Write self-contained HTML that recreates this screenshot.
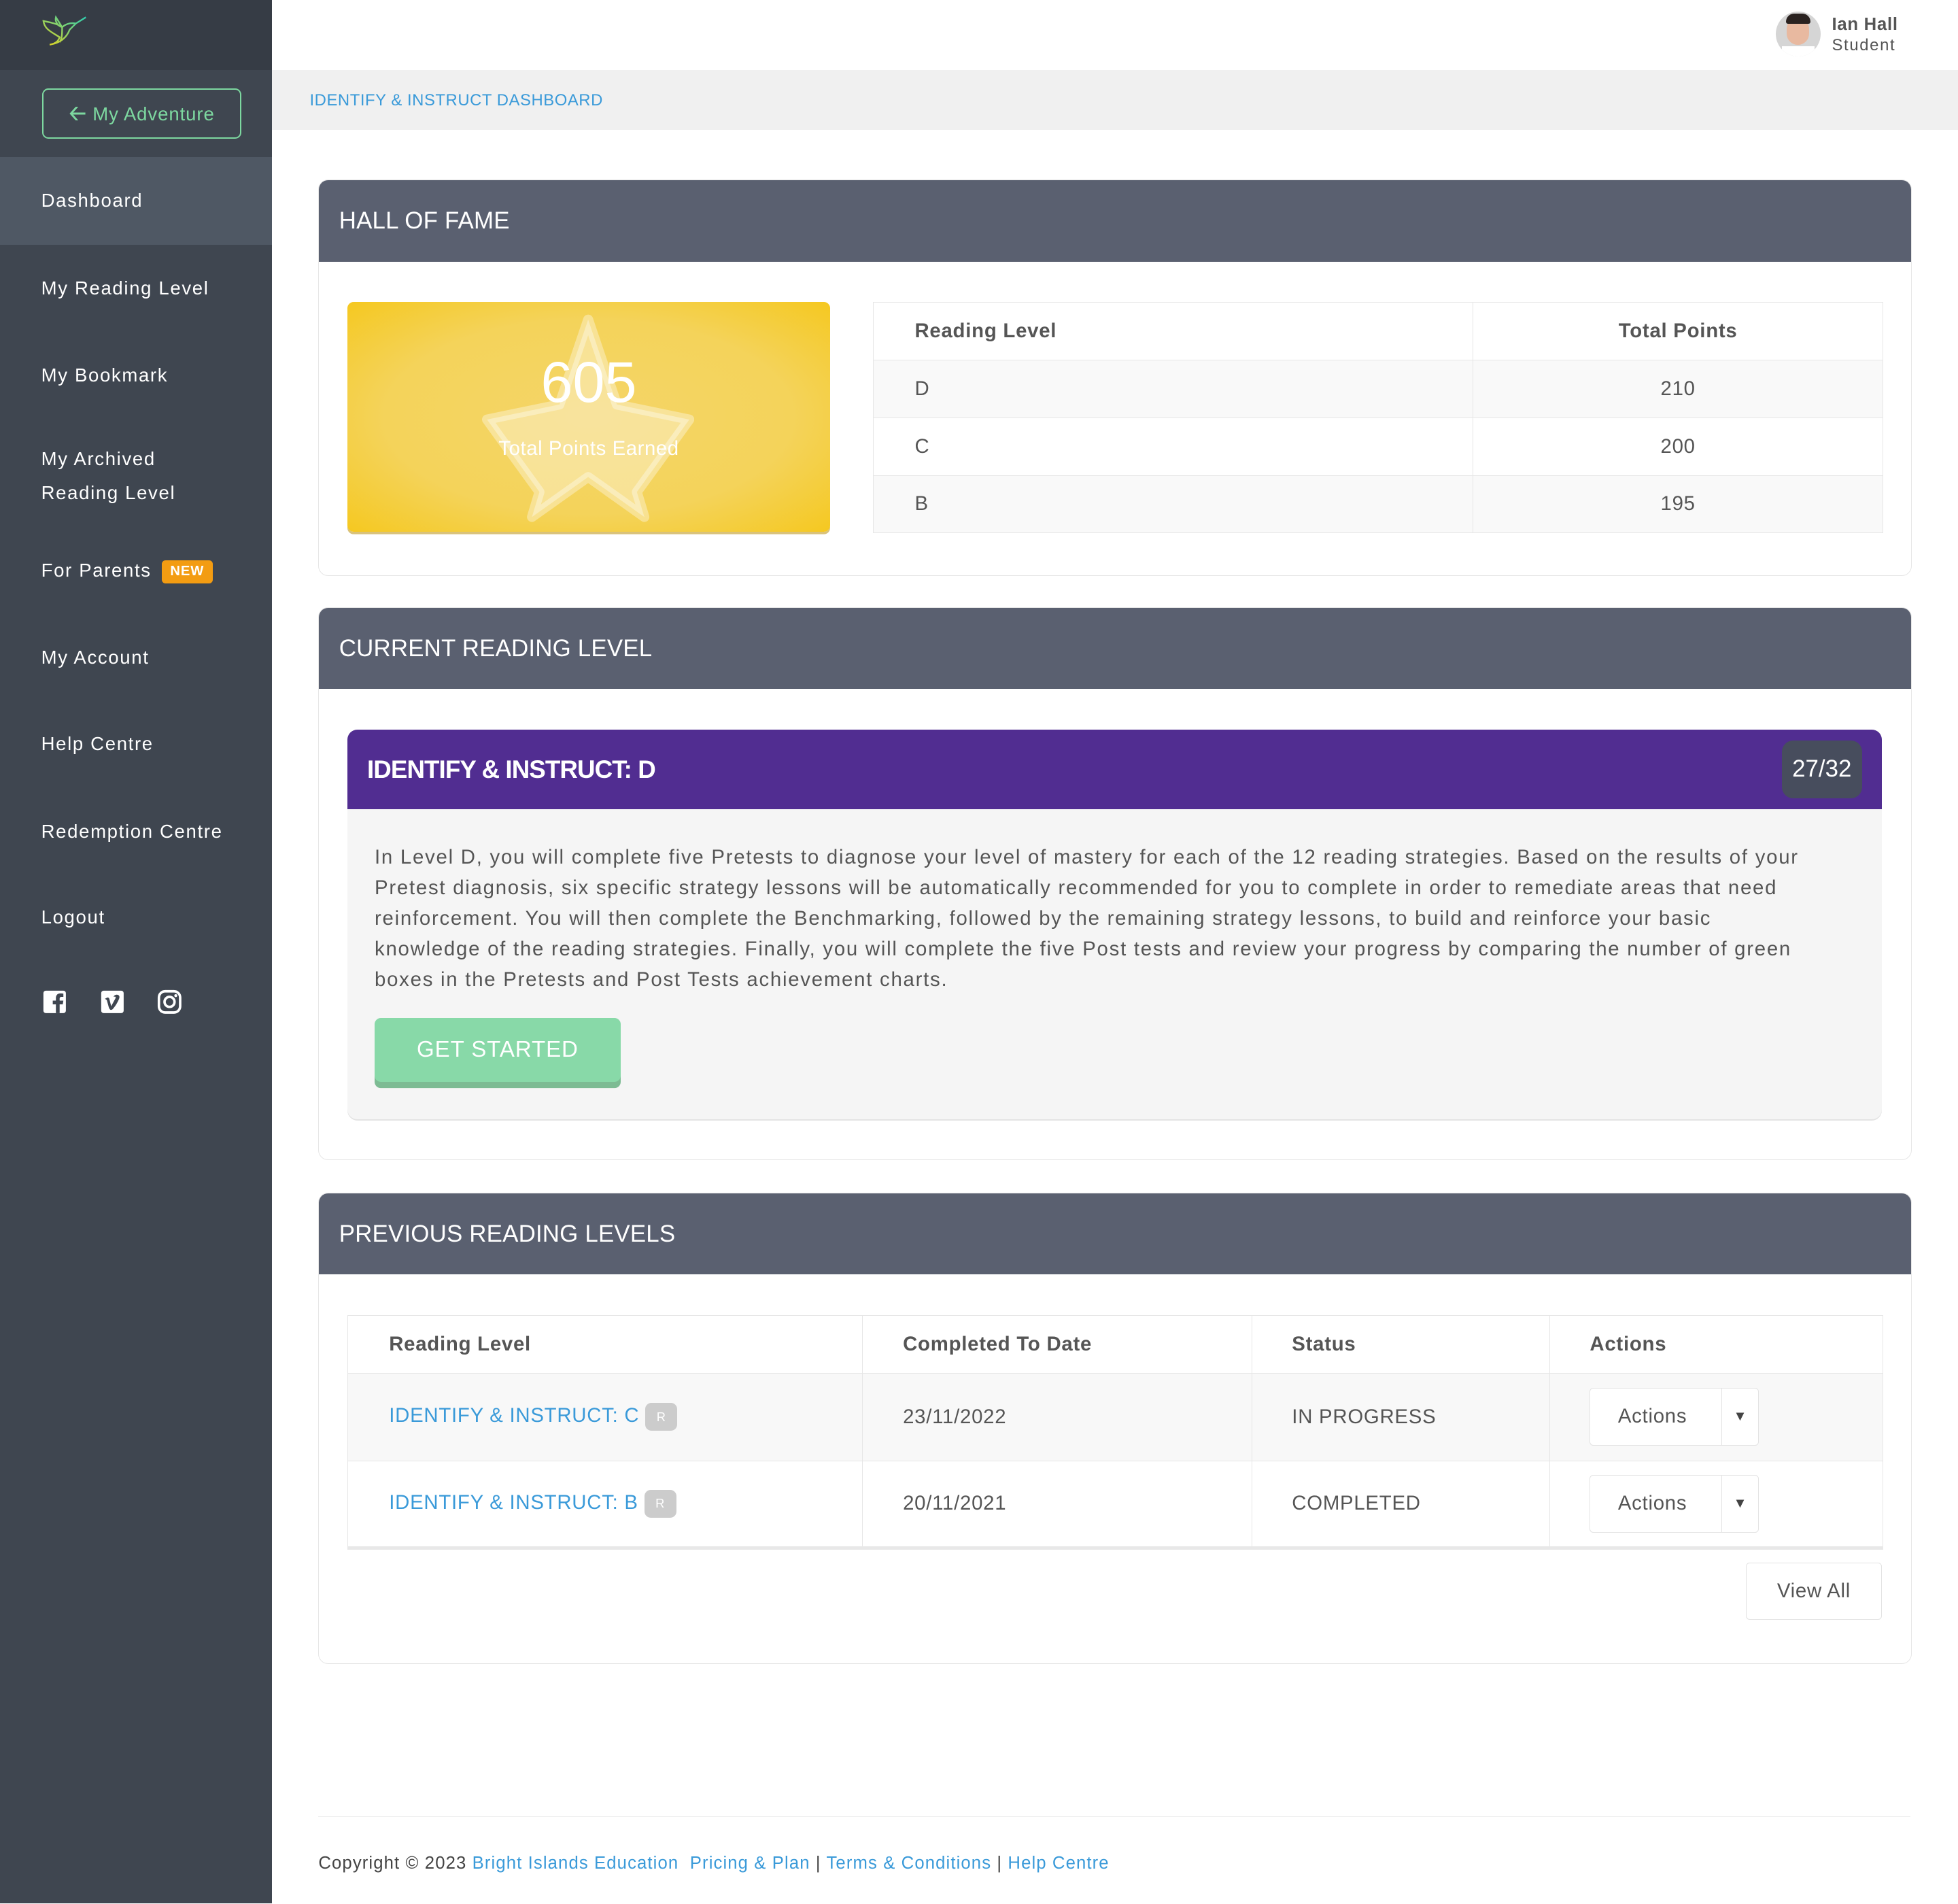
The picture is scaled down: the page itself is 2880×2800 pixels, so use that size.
<!DOCTYPE html>
<html><head><meta charset="utf-8"><style>
html,body{margin:0;padding:0}
body{width:1568px;height:1524px;zoom:1.83673;font-family:"Liberation Sans",sans-serif;background:#fff;position:relative;overflow:hidden;color:#555}
.abs{position:absolute}
#side{left:0;top:0;width:218px;height:1524px;background:#3f4650}
#logo{left:0;top:0;width:218px;height:56px;background:#363c45}
.nav{position:absolute;left:33px;color:#fff;font-size:15px;letter-spacing:.9px}
.panel{position:absolute;left:255px;width:1275px;border:1px solid #e6e6e6;border-radius:8px;background:#fff;overflow:hidden}
.ph{height:65px;background:#5a6070;color:#fff;font-size:19px;line-height:65px;padding-left:16px;letter-spacing:.1px}
table{border-collapse:collapse;position:absolute}
td,th{border:1px solid #e6e6e6;font-size:16px;letter-spacing:.4px}
th{font-weight:bold;color:#555;text-align:left}
a{color:#3a9ad9;text-decoration:none}
</style></head><body>
<div id="side" class="abs"></div>
<div id="logo" class="abs">
<svg width="60" height="40" viewBox="0 0 60 40" style="position:absolute;left:28px;top:10px">
<defs><linearGradient id="g" x1="0" y1="1" x2="1" y2="0"><stop offset="0" stop-color="#e6d31e"/><stop offset="1" stop-color="#2fcfb0"/></linearGradient></defs>
<path d="M12 26C18 25 25 22 28 14L33 9L41 4M33 9C28 8 24 10 22 12M22 12C18 9 12 8 7 7C8 14 14 16 20 20C19 23 17 25 12 26M22 12C22 17 22 21 20 24M22 12L17 4C16 8 19 11 22 12" fill="none" stroke="url(#g)" stroke-width="1.3"/>
</svg></div>
<div class="abs" style="left:34px;top:71px;width:157px;height:38px;border:1.5px solid #7dd8a0;border-radius:5px;color:#7dd8a0;font-size:15px;line-height:38px;text-align:center;letter-spacing:.5px"><b style="font-size:17px">&#129120;</b> My Adventure</div>
<div class="abs" style="left:0;top:126px;width:218px;height:70px;background:#4f5864"></div>
<div class="nav" style="top:152px">Dashboard</div>
<div class="nav" style="top:222px">My Reading Level</div>
<div class="nav" style="top:292px">My Bookmark</div>
<div class="nav" style="top:354px;line-height:27px">My Archived<br>Reading Level</div>
<div class="nav" style="top:448px">For Parents <span style="display:inline-block;background:#f39c12;border-radius:3px;font-size:11px;font-weight:bold;padding:3px 7px;margin-left:3px;vertical-align:1px;letter-spacing:.5px">NEW</span></div>
<div class="nav" style="top:518px">My Account</div>
<div class="nav" style="top:587px">Help Centre</div>
<div class="nav" style="top:657px">Redemption Centre</div>
<div class="nav" style="top:726px">Logout</div>
<svg class="abs" style="left:34px;top:792px" width="20" height="20" viewBox="0 0 20 20"><rect x="1" y="1" width="18" height="18" rx="2" fill="#fff"/><path d="M14 19V12H16.5L17 9H14V7.5C14 6.6 14.4 6 15.5 6H17V3.4C16.5 3.3 15.5 3.2 14.6 3.2C12.3 3.2 11 4.6 11 7V9H8.5V12H11V19Z" fill="#3f4650"/></svg>
<svg class="abs" style="left:80px;top:792px" width="20" height="20" viewBox="0 0 20 20"><rect x="1" y="1" width="18" height="18" rx="2" fill="#fff"/><path d="M4 7.5L5 7C6 6.2 7 6.2 7.5 7.5L9 13.5L12.5 7C13 5.8 12 5.5 11 6C11.5 3.5 16.5 3.5 15.5 7C14.5 10 12 14 10 16C8.5 17 7.7 16 7 14L5.5 8.5Z" fill="#3f4650"/></svg>
<svg class="abs" style="left:126px;top:792px" width="20" height="20" viewBox="0 0 20 20"><rect x="1.5" y="1.5" width="17" height="17" rx="5" fill="none" stroke="#fff" stroke-width="2"/><circle cx="10" cy="10" r="4" fill="none" stroke="#fff" stroke-width="2"/><circle cx="15" cy="5" r="1.2" fill="#fff"/></svg>

<!-- header -->
<div class="abs" style="left:1422px;top:9px;width:36px;height:36px;border-radius:50%;background:#d5d5d5;overflow:hidden">
<div style="position:absolute;left:9px;top:5px;width:18px;height:22px;border-radius:9px;background:#e8b9a0"></div>
<div style="position:absolute;left:8px;top:2px;width:20px;height:8px;border-radius:8px 8px 2px 2px;background:#2a2220"></div>
<div style="position:absolute;left:5px;top:28px;width:26px;height:10px;background:#fff"></div></div>
<div class="abs" style="left:1467px;top:12px;font-size:14px;font-weight:bold;color:#555;letter-spacing:.4px">Ian Hall</div>
<div class="abs" style="left:1467px;top:29px;font-size:13px;color:#555;letter-spacing:.9px">Student</div>
<div class="abs" style="left:218px;top:56px;width:1350px;height:48px;background:#f0f0f0"></div>
<div class="abs" style="left:248px;top:73px;font-size:13px;color:#3a9ad9;letter-spacing:.3px">IDENTIFY &amp; INSTRUCT DASHBOARD</div>

<!-- Hall of fame -->
<div class="panel" style="top:144px;height:316px"><div class="ph">HALL OF FAME</div></div>
<div class="abs" style="left:278px;top:242px;width:387px;height:184px;border-radius:5px;background:radial-gradient(ellipse at center,#f5d568 0%,#f4d35a 60%,#f5c820 100%);box-shadow:0 2px 0 #d9c27a;overflow:hidden">
<svg style="position:absolute;left:108px;top:8px" width="170" height="170" viewBox="0 0 170 170"><path d="M85 6L108 74L166 86L124 144L130 164L85 132L40 164L46 144L4 86L62 74Z" fill="#fff" fill-opacity=".35" stroke="#fff" stroke-opacity=".35" stroke-width="8" stroke-linejoin="round"/></svg>
<div style="position:absolute;width:100%;top:38px;text-align:center;color:#fff;font-size:46px;font-weight:300">605</div>
<div style="position:absolute;width:100%;top:108px;text-align:center;color:#fff;font-size:16px;letter-spacing:.3px">Total Points Earned</div></div>
<table style="left:699px;top:242px;width:809px;height:185px">
<tr style="height:46px"><th style="padding-left:33px;width:446px">Reading Level</th><th style="text-align:center">Total Points</th></tr>
<tr style="background:#f9f9f9"><td style="padding-left:33px">D</td><td style="text-align:center">210</td></tr>
<tr><td style="padding-left:33px">C</td><td style="text-align:center">200</td></tr>
<tr style="background:#f9f9f9"><td style="padding-left:33px">B</td><td style="text-align:center">195</td></tr></table>

<!-- Current -->
<div class="panel" style="top:486px;height:442px"><div class="ph">CURRENT READING LEVEL</div></div>
<div class="abs" style="left:278px;top:584px;width:1229px;height:312px;border-radius:8px;background:#f5f5f5;overflow:hidden;box-shadow:0 1px 0 #e3e3e3">
<div style="height:64px;background:#512d91;color:#fff;font-size:20px;font-weight:bold;line-height:64px;padding-left:16px;letter-spacing:-.5px">IDENTIFY &amp; INSTRUCT: D</div>
<div style="position:absolute;left:1149px;top:9px;width:64px;height:46px;border-radius:9px;background:#474d5d;color:#fff;font-size:19px;line-height:46px;text-align:center">27/32</div>
<div style="position:absolute;left:22px;top:90px;width:1155px;font-size:16px;line-height:24.5px;color:#555;letter-spacing:.95px">In Level D, you will complete five Pretests to diagnose your level of mastery for each of the 12 reading strategies. Based on the results of your Pretest diagnosis, six specific strategy lessons will be automatically recommended for you to complete in order to remediate areas that need reinforcement. You will then complete the Benchmarking, followed by the remaining strategy lessons, to build and reinforce your basic knowledge of the reading strategies. Finally, you will complete the five Post tests and review your progress by comparing the number of green boxes in the Pretests and Post Tests achievement charts.</div>
<div style="position:absolute;left:22px;top:231px;width:197px;height:51px;border-radius:5px;background:#88d9a8;box-shadow:0 5px 0 #7dbb93;color:#fff;font-size:18px;line-height:51px;text-align:center;letter-spacing:.5px">GET STARTED</div></div>

<!-- Previous -->
<div class="panel" style="top:955px;height:376px"><div class="ph">PREVIOUS READING LEVELS</div></div>
<table style="left:278px;top:1053px;width:1230px;height:188px;border-bottom:3px solid #e8e8e8">
<tr style="height:46px"><th style="padding-left:33px;width:378px">Reading Level</th><th style="padding-left:32px;width:278px">Completed To Date</th><th style="padding-left:32px;width:205px">Status</th><th style="padding-left:32px">Actions</th></tr>
<tr style="background:#f8f8f8;height:70px"><td style="padding-left:33px"><a>IDENTIFY &amp; INSTRUCT: C</a> <span style="display:inline-block;background:#ccc;color:#fff;font-size:10px;border-radius:5px;padding:5px 9px;vertical-align:1px">R</span></td><td style="padding-left:32px">23/11/2022</td><td style="padding-left:32px">IN PROGRESS</td><td style="padding-left:32px"><div style="width:134px;height:45px;border:1px solid #e3e3e3;border-radius:3px;background:#fff;position:relative;line-height:45px"><span style="padding-left:22px">Actions</span><span style="position:absolute;left:105px;top:0;height:45px;border-left:1px solid #e3e3e3;width:29px;text-align:center;font-size:11px;color:#444">&#9660;</span></div></td></tr>
<tr style="height:70px"><td style="padding-left:33px"><a>IDENTIFY &amp; INSTRUCT: B</a> <span style="display:inline-block;background:#ccc;color:#fff;font-size:10px;border-radius:5px;padding:5px 9px;vertical-align:1px">R</span></td><td style="padding-left:32px">20/11/2021</td><td style="padding-left:32px">COMPLETED</td><td style="padding-left:32px"><div style="width:134px;height:45px;border:1px solid #e3e3e3;border-radius:3px;background:#fff;position:relative;line-height:45px"><span style="padding-left:22px">Actions</span><span style="position:absolute;left:105px;top:0;height:45px;border-left:1px solid #e3e3e3;width:29px;text-align:center;font-size:11px;color:#444">&#9660;</span></div></td></tr></table>
<div class="abs" style="left:1398px;top:1251px;width:108px;height:45px;border:1px solid #e3e3e3;border-radius:3px;font-size:16px;line-height:45px;text-align:center;letter-spacing:.4px">View All</div>

<div class="abs" style="left:255px;top:1454px;width:1275px;border-top:1px solid #eee"></div>
<div class="abs" style="left:255px;top:1484px;font-size:14px;color:#444;letter-spacing:.6px">Copyright © 2023 <a>Bright Islands Education</a> &nbsp;<a>Pricing &amp; Plan</a> | <a>Terms &amp; Conditions</a> | <a>Help Centre</a></div>
</body></html>
